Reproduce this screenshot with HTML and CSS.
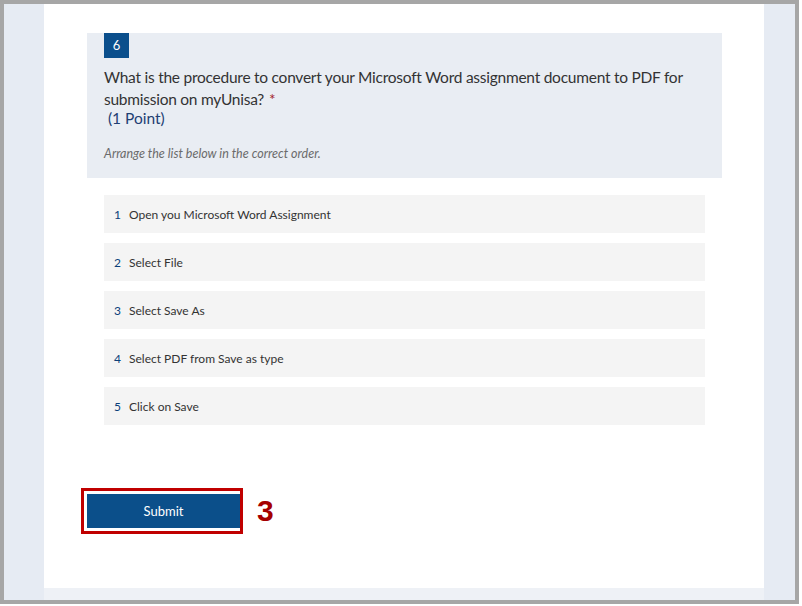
FILE: index.html
```html
<!DOCTYPE html>
<html lang="en">
<head>
  <meta charset="UTF-8">
  <title>Question 6</title>
  <link rel="stylesheet" href="styles.css">
</head>
<body>
  <div class="frame">
    <div class="page">
      <div class="form-card">
        <div class="question">
          <div class="q-number">6</div>
          <div class="q-title">What is the procedure to convert your Microsoft Word assignment document to PDF for submission on myUnisa?<span class="required">*</span></div>
          <div class="q-points">&nbsp;(1 Point)</div>
          <div class="q-hint">Arrange the list below in the correct order.</div>
        </div>

        <ol class="rank-list">
          <li class="rank-item"><span class="rank-num">1</span>Open you Microsoft Word Assignment</li>
          <li class="rank-item"><span class="rank-num">2</span>Select File</li>
          <li class="rank-item"><span class="rank-num">3</span>Select Save As</li>
          <li class="rank-item"><span class="rank-num">4</span>Select PDF from Save as type</li>
          <li class="rank-item"><span class="rank-num">5</span>Click on Save</li>
        </ol>

        <div class="submit-row">
          <div class="callout">
            <button class="submit-button">Submit</button>
          </div>
          <span class="callout-label">3</span>
        </div>
      </div>
    </div>
  </div>
</body>
</html>
```

FILE: styles.css
```css
body {
  margin: 0;
  background-color: #fff;
  font-family: 'Segoe UI', Lato, sans-serif;
  color: #333;
}

.frame {
  box-sizing: border-box;
  width: 799px;
  height: 604px;
  border: 4px solid #a6a6a6;
  background-color: #e6ebf3;
  overflow: hidden;
}

.page {
  padding-left: 40px;
  height: 100%;
}

.form-card {
  box-sizing: border-box;
  width: 720px;
  height: 596px;
  background-color: #fff;
  padding: 29px 42px 0 43px;
  border-bottom: 12px solid #eef1f6;
}

.question {
  background-color: #e9edf3;
  padding: 0 17px 21px;
  height: 145px;
  box-sizing: border-box;
}

.q-number {
  width: 25px;
  height: 25px;
  background-color: #0b4f8c;
  color: #fff;
  font-size: 13px;
  line-height: 25px;
  text-align: center;
}

.q-title {
  margin-top: 8px;
  font-size: 15.5px;
  letter-spacing: -0.25px;
  line-height: 22px;
  color: #333;
}

.required {
  color: #a4262c;
  margin-left: 5px;
}

.q-points {
  font-size: 15.5px;
  line-height: 16px;
  color: #1f3f73;
}

.q-hint {
  margin-top: 20px;
  font-size: 12.5px;
  font-style: italic;
  color: #6b6b6b;
}

.rank-list {
  list-style: none;
  margin: 17px 17px 0;
  padding: 0;
  display: flex;
  flex-direction: column;
  gap: 10px;
}

.rank-item {
  height: 38px;
  background-color: #f4f4f4;
  display: flex;
  align-items: center;
  padding-left: 10px;
  font-size: 12px;
  color: #333;
}

.rank-num {
  color: #0b3f7a;
  width: 15px;
}

.submit-row {
  margin-top: 63px;
  display: flex;
  align-items: center;
  gap: 14px;
  margin-left: -6px;
}

.callout {
  border: 3px solid #c00000;
  padding: 3px 0 3px 3px;
}

.submit-button {
  display: block;
  width: 153px;
  height: 34px;
  border: none;
  background-color: #0b4f8a;
  color: #fff;
  font-family: inherit;
  font-size: 13px;
}

.callout-label {
  font-family: 'Liberation Sans', Arial, sans-serif;
  font-weight: bold;
  font-size: 30px;
  color: #a50000;
}
```
